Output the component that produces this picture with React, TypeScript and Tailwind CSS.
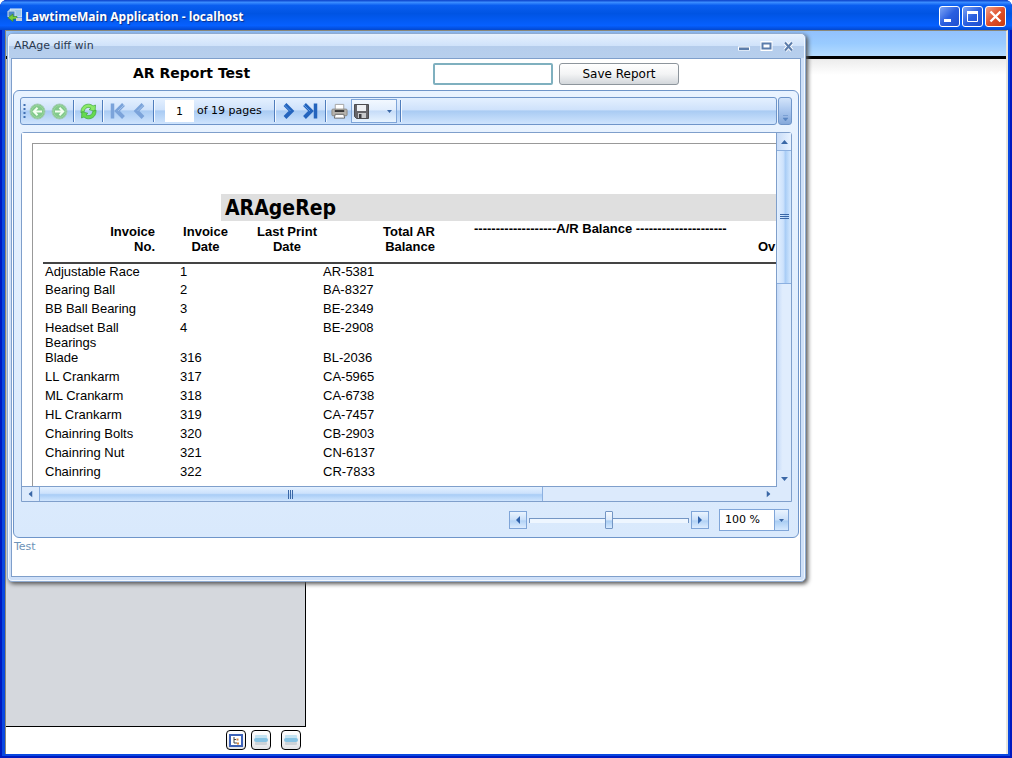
import type { ReactNode } from "react";

const rows = [
  { name: "Adjustable Race", no: "1", code: "AR-5381" },
  { name: "Bearing Ball", no: "2", code: "BA-8327" },
  { name: "BB Ball Bearing", no: "3", code: "BE-2349" },
  { name: "Headset Ball Bearings", no: "4", code: "BE-2908" },
  { name: "Blade", no: "316", code: "BL-2036" },
  { name: "LL Crankarm", no: "317", code: "CA-5965" },
  { name: "ML Crankarm", no: "318", code: "CA-6738" },
  { name: "HL Crankarm", no: "319", code: "CA-7457" },
  { name: "Chainring Bolts", no: "320", code: "CB-2903" },
  { name: "Chainring Nut", no: "321", code: "CN-6137" },
  { name: "Chainring", no: "322", code: "CR-7833" },
];

function Separator() {
  return <span className="mx-[3px] h-[22px] w-px shrink-0 bg-[#4f7dbd] shadow-[1px_0_0_#f2f8ff]" />;
}

function ToolButton({ label, children }: { label: string; children: ReactNode }) {
  return (
    <button type="button" aria-label={label} className="flex h-[22px] w-[22px] shrink-0 items-center justify-center">
      {children}
    </button>
  );
}

function RoundArrow({ flip = false }: { flip?: boolean }) {
  return (
    <svg width="17" height="17" viewBox="0 0 17 17" className={flip ? "rotate-180" : ""}>
      <circle cx="8.5" cy="8.5" r="7.5" fill="#83c98d" stroke="#a3c9b5" />
      <circle cx="8.5" cy="8.5" r="6" fill="none" stroke="#9ad79d" />
      <path d="M13 8.5H5M8.5 4.8L4.8 8.5l3.7 3.7" fill="none" stroke="#f4fff2" strokeWidth="2" />
    </svg>
  );
}

function RefreshIcon() {
  return (
    <svg width="17" height="17" viewBox="0 0 17 17" stroke="#3fa83c" strokeWidth="0.7">
      <path d="M1 10C.6 4.600 4 1.200 8.500 1.200c2 0 3.500.8 4.500 1.800L15.500 2l-.4 6.300-6-1.600L11 5.300C8 3.300 4.600 5 4.400 8.400z" fill="#8bea68" />
      <path d="M16 7c.4 5.400-3 8.800-7.500 8.800-2 0-3.500-.8-4.500-1.800L1.500 15l.4-6.300 6 1.600L6 11.700c3 2 6.400.3 6.600-3.100z" fill="#66da50" />
    </svg>
  );
}

function Chevron({ flip = false, bar = false, faded = false }: { flip?: boolean; bar?: boolean; faded?: boolean }) {
  const color = faded ? "#7ba3da" : "#2464bd";
  return (
    <svg width="18" height="18" viewBox="0 0 18 18" className={flip ? "-scale-x-100" : ""} fill="none" strokeWidth="4">
      <path d={bar ? "M2.500 2.500L9 9L2.500 15.500" : "M5 2.500L11.500 9l-6.500 6.500"} stroke={color} />
      <path d={bar ? "M2 3L8 9" : "M4.500 3L10.500 9"} stroke={faded ? "#9fc0ea" : "#5d9be6"} strokeWidth="1" />
      {bar && <path d="M13.500 1.500v15" stroke={color} strokeWidth="3.500" />}
    </svg>
  );
}

function PrinterIcon() {
  return (
    <svg width="17" height="17" viewBox="0 0 18 17">
      <path d="M4.500 1h9v6h-9z" fill="#fff" stroke="#a3a3a3" />
      <rect x="1" y="6" width="16" height="7" rx="1" fill="#b5b2ac" stroke="#8a8780" />
      <path d="M4 8h10" stroke="#333" strokeWidth="2" />
      <path d="M4.500 11.500h9l1 4h-11z" fill="#fff" stroke="#666" />
    </svg>
  );
}

function DiskIcon() {
  return (
    <svg width="15" height="15" viewBox="0 0 15 15">
      <path d="M.5.5h14v14h-12l-2-2z" fill="#65656a" stroke="#4c4c50" />
      <path d="M3 1h9v6H3z" fill="#eef0f4" />
      <path d="M4 9h8v5H4z" fill="#c8cacd" />
      <path d="M5 10h2.500v4H5z" fill="#3f3f44" />
    </svg>
  );
}

function Triangle({ className = "" }: { className?: string }) {
  return (
    <svg width="7" height="4" viewBox="0 0 7 4" className={className}>
      <path d="M0 0h7L3.500 4z" fill="#3a67a6" />
    </svg>
  );
}

function TitleBar() {
  return (
    <header className="flex h-[30px] shrink-0 items-center bg-[linear-gradient(#0a3fc8,#3a8cff_8%,#0a5ef0_18%,#0054e3_45%,#0660ff_85%,#0348d0)] pr-[6px] pl-[7px]">
      <svg width="15" height="14" viewBox="0 0 15 14">
        <path d="M3 1h12v8H3z" fill="#9fc7ea" stroke="#e3eef8" />
        <path d="M1 3h7v6H1z" fill="#4b86c6" stroke="#cfe0ee" />
        <path d="M10 8.500H6V6L1 9.800 6 13.500V11h4z" fill="#75cf3e" stroke="#3b8b2a" strokeWidth=".7" />
        <path d="M9 10h6v3H9z" fill="#c9cfd6" />
      </svg>
      <h1 className="ml-[3px] flex-1 pt-[3px] font-['Open_Sans','Noto_Sans',sans-serif] text-xs font-bold text-white [text-shadow:1px_1px_1px_#0a2f8a]">
        LawtimeMain Application - localhost
      </h1>
      <div className="flex gap-[2px] pt-[3px]">
        <button type="button" aria-label="Minimize" className="h-[21px] w-[21px] rounded-[3px] border border-white bg-[linear-gradient(135deg,#7ea5f5,#2a5fe0_50%,#1f4fd0)]">
          <svg width="19" height="19" viewBox="0 0 19 19"><path d="M4 12h7v3H4z" fill="#fff" /></svg>
        </button>
        <button type="button" aria-label="Maximize" className="h-[21px] w-[21px] rounded-[3px] border border-white bg-[linear-gradient(135deg,#7ea5f5,#2a5fe0_50%,#1f4fd0)]">
          <svg width="19" height="19" viewBox="0 0 19 19"><path d="M4.500 5h10v9.500h-10z" fill="none" stroke="#fff" /><path d="M4 5.500h11" stroke="#fff" strokeWidth="3" /></svg>
        </button>
        <button type="button" aria-label="Close" className="h-[21px] w-[21px] rounded-[3px] border border-white bg-[linear-gradient(135deg,#f0a088,#e0502b_50%,#c83c10)]">
          <svg width="19" height="19" viewBox="0 0 19 19"><path d="M4.500 4.500l10 10m0-10l-10 10" stroke="#fff" strokeWidth="2.400" /></svg>
        </button>
      </div>
    </header>
  );
}

function Toolbar() {
  return (
    <div className="flex gap-px">
      <div className="flex h-[28px] flex-1 items-center rounded-[3px] border border-[#6f95c9] bg-[linear-gradient(#e4f0ff,#cfe2fb_45%,#a9cbf3_50%,#cfe4fd)]">
        <svg width="3" height="16" className="ml-[2px] shrink-0">
          <path d="M1.500 1v15" stroke="#3f6fb3" strokeWidth="2" strokeDasharray="2 2" />
        </svg>
        <ToolButton label="Back"><RoundArrow /></ToolButton>
        <ToolButton label="Forward"><RoundArrow flip /></ToolButton>
        <Separator />
        <ToolButton label="Refresh"><RefreshIcon /></ToolButton>
        <Separator />
        <ToolButton label="First page"><Chevron flip bar faded /></ToolButton>
        <ToolButton label="Previous page"><Chevron flip faded /></ToolButton>
        <Separator />
        <label className="ml-2 flex items-center">
          <input aria-label="Page" defaultValue="1" className="h-[22px] w-[29px] bg-white text-center outline-none" />
          <span className="ml-[3px] whitespace-nowrap">of 19 pages</span>
        </label>
        <span className="w-[9px]" />
        <Separator />
        <ToolButton label="Next page"><Chevron /></ToolButton>
        <ToolButton label="Last page"><Chevron bar /></ToolButton>
        <Separator />
        <ToolButton label="Print"><PrinterIcon /></ToolButton>
        <button type="button" aria-label="Export" className="flex h-[24px] w-[46px] items-center justify-between border border-[#7fa5d8] bg-[linear-gradient(#f2f8ff,#e2eefd_45%,#c6dcf8_50%,#e8f4ff)] pr-1 pl-[2px]">
          <DiskIcon />
          <svg width="5" height="3"><path d="M0 0h5L2.500 3z" fill="#3a67a6" /></svg>
        </button>
        <Separator />
      </div>
      <button type="button" aria-label="More tools" className="flex h-[28px] w-[14px] items-end justify-center rounded-[3px] border border-[#6f95c9] bg-[linear-gradient(#d3e4fa,#a9c6ee_50%,#86a9da)] pb-[3px]">
        <svg width="5" height="6"><path d="M0 .5h5M0 3h5L2.500 6z" fill="#5b86c2" stroke="#5b86c2" strokeWidth=".5" /></svg>
      </button>
    </div>
  );
}

function ReportPage() {
  return (
    <div className="h-full border-t border-l border-[#999] bg-white pt-[50px] font-['Liberation_Sans',Arial,sans-serif] text-[13px] leading-[15px]">
      <h2 className="ml-[188px] h-[27px] bg-[#dfdfdf] pl-1 font-['DejaVu_Sans_Condensed','DejaVu_Sans',sans-serif] text-[21px] leading-[28px] font-bold">
        ARAgeRep
      </h2>
      <div className="ml-[10px]">
        <table className="w-full table-fixed border-collapse">
          <colgroup>
            <col className="w-[127px]" />
            <col className="w-[71px]" />
            <col className="w-[82px]" />
            <col className="w-[112px]" />
            <col className="w-[323px]" />
            <col />
          </colgroup>
          <thead>
            <tr className="h-[42px] border-b-2 border-[#444] align-top">
              <th className="pt-[3px] pr-[15px] text-right">Invoice<br />No.</th>
              <th className="pt-[3px]">Invoice<br />Date</th>
              <th className="pt-[3px] pl-[10px] whitespace-nowrap">Last Print<br />Date</th>
              <th className="pt-[3px] text-right">Total AR<br />Balance</th>
              <th className="pl-[39px] text-left whitespace-nowrap">-------------------A/R Balance ---------------------</th>
              <th className="pt-[18px] text-left">Ov</th>
            </tr>
          </thead>
          <tbody>
            {rows.map((row) => (
              <tr key={row.no} className="h-[19px] align-top">
                <td className="pr-[30px] pl-[2px]">{row.name}</td>
                <td className="pl-[10px]">{row.no}</td>
                <td />
                <td>{row.code}</td>
                <td />
                <td />
              </tr>
            ))}
          </tbody>
        </table>
      </div>
    </div>
  );
}

function VerticalScroll() {
  return (
    <div className="flex w-[14px] flex-col items-center bg-[#dceafc]">
      <button type="button" aria-label="Scroll up" className="flex h-[17px] w-full items-center justify-center bg-[linear-gradient(90deg,#c8dcf8,#e8f2ff)]"><Triangle className="rotate-180" /></button>
      <div className="w-full flex-1 bg-[linear-gradient(90deg,#c5daf8,#e0edfd_40%)]">
        <div className="flex h-[42%] items-center justify-center border-y border-[#8cb0e0] bg-[linear-gradient(90deg,#e3f0ff,#cde2fc_45%,#a9cdf6_60%,#d5e9ff)]">
          <svg width="9" height="6"><path d="M0 .5h9M0 2.500h9M0 4.500h9" stroke="#3a67a6" /></svg>
        </div>
      </div>
      <button type="button" aria-label="Scroll down" className="flex h-[17px] w-full items-center justify-center"><Triangle /></button>
    </div>
  );
}

function HorizontalScroll() {
  return (
    <div className="flex h-[14px] items-stretch bg-[#dceafc]">
      <button type="button" aria-label="Scroll left" className="flex w-[18px] items-center justify-center border-r border-[#8cb0e0]"><Triangle className="rotate-90" /></button>
      <div className="flex-1">
        <div className="flex h-full w-[70%] items-center justify-center border-r border-[#8cb0e0] bg-[linear-gradient(#e3f0ff,#cde2fc_45%,#a9cdf6_55%,#cfe5fe)]">
          <svg width="6" height="9"><path d="M.5 0v9M2.500 0v9M4.500 0v9" stroke="#3a67a6" /></svg>
        </div>
      </div>
      <button type="button" aria-label="Scroll right" className="flex w-[18px] items-center justify-center"><Triangle className="-rotate-90" /></button>
    </div>
  );
}

function ZoomBar() {
  return (
    <div className="mt-[7px] flex h-[22px] items-center justify-end pr-[3px]">
      <button type="button" aria-label="Zoom out" className="flex h-[18px] w-[18px] items-center justify-center border border-[#7fa5d8] bg-[linear-gradient(#eaf4ff,#c9dff9_50%,#b2d2f5_55%,#dcecff)]">
        <svg width="4" height="8"><path d="M4 0v8L0 4z" fill="#2f62ab" /></svg>
      </button>
      <input
        type="range"
        aria-label="Zoom"
        defaultValue="50"
        className="mx-[2px] h-[18px] w-[160px] appearance-none bg-transparent [&::-webkit-slider-runnable-track]:h-[5px] [&::-webkit-slider-runnable-track]:border-x [&::-webkit-slider-runnable-track]:border-t [&::-webkit-slider-runnable-track]:border-[#7496c4] [&::-webkit-slider-runnable-track]:bg-[#eef6ff] [&::-webkit-slider-thumb]:-mt-[8px] [&::-webkit-slider-thumb]:h-[18px] [&::-webkit-slider-thumb]:w-[8px] [&::-webkit-slider-thumb]:appearance-none [&::-webkit-slider-thumb]:rounded-[1px] [&::-webkit-slider-thumb]:border [&::-webkit-slider-thumb]:border-[#7496c4] [&::-webkit-slider-thumb]:bg-[linear-gradient(#f4f9ff,#dbe9fb_50%,#a9cdf3_55%,#d5e9ff)]"
      />
      <button type="button" aria-label="Zoom in" className="flex h-[18px] w-[18px] items-center justify-center border border-[#7fa5d8] bg-[linear-gradient(#eaf4ff,#c9dff9_50%,#b2d2f5_55%,#dcecff)]">
        <svg width="4" height="8"><path d="M0 0v8l4-4z" fill="#2f62ab" /></svg>
      </button>
      <div className="ml-[10px] flex h-[22px] w-[70px] border border-[#7fa5d8] bg-white">
        <input aria-label="Zoom level" defaultValue="100 %" className="w-[54px] bg-white pl-[5px] outline-none" />
        <button type="button" aria-label="Zoom levels" className="flex flex-1 items-center justify-center border-l border-[#7fa5d8] bg-[linear-gradient(#eaf4ff,#c9dff9_50%,#a9cdf3_55%,#d5e9ff)]">
          <svg width="5" height="3"><path d="M0 0h5L2.500 3z" fill="#3a67a6" /></svg>
        </button>
      </div>
    </div>
  );
}

function ReportWindow() {
  return (
    <section className="absolute top-[2px] left-px flex h-[549px] w-[799px] flex-col rounded-[5px] border border-[#8fabd0] bg-[#cfe0f8] pr-1 pb-1 pl-[3px] font-['DejaVu_Sans',sans-serif] text-[11px] text-black shadow-[2px_2px_4px_#555,inset_0_0_0_1px_#f2f8ff]">
      <div className="-mr-[3px] -ml-[2px] flex h-[24px] shrink-0 items-center rounded-t-[4px] bg-[linear-gradient(#e6f1fe,#cfe2fa_50%,#b5cdec_50%,#b7cfed)] pr-[9px] pl-[5px]">
        <span className="flex-1 text-[#2b3a50]">ARAge diff win</span>
        <div className="flex gap-[9px]">
          <button type="button" aria-label="Minimize window">
            <svg width="14" height="11"><path d="M1 5.500h12v4H1z" fill="#fff" /><path d="M2 6.500h10v2.500H2z" fill="#5c7dab" /></svg>
          </button>
          <button type="button" aria-label="Maximize window">
            <svg width="13" height="11"><path d="M3 2.500h7v5H3z" fill="none" stroke="#fff" strokeWidth="5" /><path d="M2.500 2.500h8v5h-8z" fill="none" stroke="#5c7dab" strokeWidth="2" /></svg>
          </button>
          <button type="button" aria-label="Close window">
            <svg width="13" height="11"><path d="M3 1.500l7 8m0-8l-7 8" stroke="#fff" strokeWidth="4" /><path d="M3 1.500l7 8m0-8l-7 8" stroke="#5c7dab" strokeWidth="2" /></svg>
          </button>
        </div>
      </div>

      <div className="flex flex-1 flex-col border border-[#7f9fcb] bg-white">
        <div className="flex h-[31px] items-start pt-1">
          <h2 className="w-[421px] pl-[121px] text-sm leading-5 font-bold">AR Report Test</h2>
          <input aria-label="Report name" className="h-[22px] w-[120px] rounded-[2px] border-2 border-[#7fb0bf] bg-white px-1 outline-none" />
          <button type="button" className="ml-[6px] h-[22px] w-[120px] rounded-[3px] border border-[#8d959c] bg-[linear-gradient(#fff,#f3f4f5_50%,#d3d7db)] text-xs">Save Report</button>
        </div>

        <div className="mr-px ml-px flex h-[448px] flex-col rounded-[6px] border border-[#6f95c9] bg-[linear-gradient(#e9f3ff,#d9e9fc)] px-[6px] pt-[6px]">
          <Toolbar />
          <div className="mt-[7px] ml-px grid h-[370px] grid-cols-[1fr_14px] grid-rows-[1fr_14px] rounded-t-[3px] border border-[#7f9fcb] bg-[#dceafc]">
            <div className="overflow-hidden border-r border-b border-[#7f9fcb] bg-white pt-[10px] pl-[10px]">
              <ReportPage />
            </div>
            <VerticalScroll />
            <HorizontalScroll />
          </div>
          <ZoomBar />
        </div>
        <p className="pl-[2px] leading-[18px] text-[#6d93b8]">Test</p>
      </div>
    </section>
  );
}

function FooterButton({ label, children }: { label: string; children: ReactNode }) {
  return (
    <button type="button" aria-label={label} className="flex h-[20px] w-[20px] items-center justify-center rounded-[4px] border border-black bg-[linear-gradient(#fff,#e2e4e7)]">
      {children}
    </button>
  );
}

function StackIcon() {
  return (
    <svg width="14" height="12" viewBox="0 0 14 12">
      <rect x="1" y="1" width="12" height="4" rx="1" fill="#c3e3f2" />
      <rect x="0" y="4" width="14" height="4" rx="2" fill="#86c3e4" />
      <rect x="1" y="8" width="12" height="3" rx="1" fill="#cdd3d8" />
    </svg>
  );
}

export default function App() {
  return (
    <div className="flex h-screen flex-col overflow-hidden rounded-t-[7px] bg-[#0a48e0] shadow-[inset_0_0_0_2px_#0019c0]">
      <TitleBar />
      <main className="relative mr-1 mb-1 ml-[5px] flex flex-1 flex-col border-t border-r-2 border-l border-[#8b8878] border-r-[#e8e6dc] bg-white">
        <div className="h-[28px] shrink-0 border-b-[3px] border-black bg-[linear-gradient(#92c1fd,#99cbff_50%,#b5dcff)]" />
        <div className="flex flex-1 bg-[linear-gradient(#ececec,#fff_16px)]">
          <aside className="w-[300px] border-r border-b border-black bg-[#d5d8dd]" />
        </div>
        <footer className="flex h-[27px] w-[300px] shrink-0 items-start justify-end pt-[3px] pr-[5px]">
          <FooterButton label="Tree view">
            <svg width="14" height="13" viewBox="0 0 14 13">
              <path d="M1 1h12v11H1z" fill="#fff" stroke="#3d62b8" strokeWidth="2" />
              <path d="M5 3v6h3M5 5.500h2" fill="none" stroke="#444" />
              <path d="M7.500 4.500h2v2h-2zM8 8.500h2v2H8z" fill="#d9883f" />
            </svg>
          </FooterButton>
          <span className="w-[5px]" />
          <FooterButton label="Open list"><StackIcon /></FooterButton>
          <span className="w-[10px]" />
          <FooterButton label="Closed list"><StackIcon /></FooterButton>
        </footer>
        <ReportWindow />
      </main>
    </div>
  );
}
